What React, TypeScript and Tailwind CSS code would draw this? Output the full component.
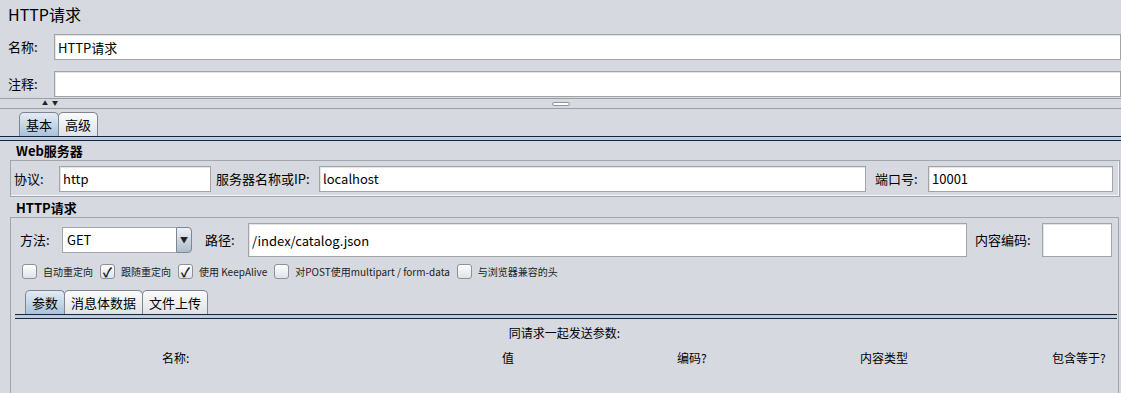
import React from 'react';

const font = { fontFamily: '"Noto Sans CJK SC", "Liberation Sans", sans-serif' };

function TextField({ value = '', className = '' }: { value?: string; className?: string }) {
    return (
        <div className={`bg-white border border-[#a4a4a4] shadow-[inset_1px_1px_0_#e4e4e4] flex items-center px-[3px] text-[13px] text-black ${className}`}>
            <span className="leading-none">{value}</span>
        </div>
    );
}

function Tab({ label, active }: { label: string; active?: boolean }) {
    return (
        <div
            className={`h-[24px] px-[6px] flex items-center border border-b-0 border-[#7f8590] rounded-t-[5px] text-[13px] -mr-px ${
                active ? 'bg-gradient-to-b from-[#e3ecf5] to-[#a9c2db]' : 'bg-gradient-to-b from-[#fbfbfc] to-[#dfe2e7]'
            }`}
        >
            {label}
        </div>
    );
}

function TabLine() {
    return <div className="h-[5px] border-t border-b border-[#1c2236] bg-[#b9cde3]" />;
}

function Check({ checked, label }: { checked?: boolean; label: string }) {
    return (
        <div className="flex items-center gap-[6px] mr-[7px]">
            <div className="w-[15px] h-[15px] rounded-[3px] border border-[#8c919b] bg-gradient-to-b from-white to-[#dfe2e7] flex items-center justify-center text-[13px] font-bold leading-none text-[#1a1a1a]">
                {checked ? '✓' : ''}
            </div>
            <span className="text-[10px] text-[#222]">{label}</span>
        </div>
    );
}

export default function App() {
    return (
        <div className="w-[1121px] h-[393px] bg-[#d6d9df] overflow-hidden text-black" style={font}>
            {/* Title */}
            <div className="h-[34px] pl-[8px] pt-[2px] text-[16px] leading-[24px]">HTTP请求</div>

            {/* Name / comment */}
            <div className="flex items-center pl-[8px] h-[26px]">
                <span className="w-[46px] text-[13px]">名称:</span>
                <TextField value="HTTP请求" className="flex-1 h-[26px]" />
            </div>
            <div className="flex items-center pl-[8px] h-[26px] mt-[11px]">
                <span className="w-[46px] text-[13px]">注释:</span>
                <TextField className="flex-1 h-[26px]" />
            </div>

            {/* Split pane divider */}
            <div className="mt-[1px] h-[11px] border-t border-b border-[#9c9fa6] flex items-center relative">
                <div className="absolute left-[42px] top-[1px] flex gap-[4px] text-[6px] leading-none text-[#222]">
                    <span>▲</span>
                    <span>▼</span>
                </div>
                <div className="mx-auto w-[18px] h-[4px] rounded-[2px] border border-[#8f939b] bg-white" />
            </div>

            {/* Main tabs */}
            <div className="pt-[3px]">
                <div className="flex pl-[19px]">
                    <Tab label="基本" active />
                    <Tab label="高级" />
                </div>
                <TabLine />
            </div>

            {/* Web server */}
            <div className="pl-[16px] h-[19px] flex items-end text-[13px] font-bold">Web服务器</div>
            <div className="ml-[10px] mr-[1px] h-[37px] border border-[#a2a5ab] shadow-[inset_-1px_-1px_0_#f4f5f7] flex items-center pl-[3px] pr-[6px] text-[13px]">
                <span className="w-[45px]">协议:</span>
                <TextField value="http" className="w-[152px] h-[26px]" />
                <span className="ml-[5px] w-[103px]">服务器名称或IP:</span>
                <TextField value="localhost" className="flex-1 h-[26px]" />
                <span className="ml-[9px] w-[53px]">端口号:</span>
                <TextField value="10001" className="w-[185px] h-[26px]" />
            </div>

            {/* HTTP request */}
            <div className="pl-[16px] h-[20px] flex items-end text-[13px] font-bold">HTTP请求</div>
            <div className="ml-[10px] mr-[2px] h-[200px] border-l border-t border-r border-[#a2a5ab]">
                <div className="flex items-center pt-[5px] pl-[9px] pr-[6px] text-[13px]">
                    <span className="w-[42px]">方法:</span>
                    <div className="flex h-[26px] w-[130px]">
                        <div className="flex-1 bg-white border border-[#a4a4a4] border-r-0 flex items-center px-[4px]">GET</div>
                        <div className="w-[16px] border border-[#7d8694] rounded-r-[4px] bg-gradient-to-b from-[#eef2f6] to-[#aebccb] flex items-center justify-center text-[8px] leading-none text-[#222]">
                            ▼
                        </div>
                    </div>
                    <span className="ml-[13px] w-[43px]">路径:</span>
                    <TextField value="/index/catalog.json" className="flex-1 h-[34px]" />
                    <span className="ml-[8px] w-[67px]">内容编码:</span>
                    <TextField className="w-[70px] h-[34px]" />
                </div>

                <div className="flex items-center pl-[11px] mt-[5px] h-[18px]">
                    <Check label="自动重定向" />
                    <Check checked label="跟随重定向" />
                    <Check checked label="使用 KeepAlive" />
                    <Check label="对POST使用multipart / form-data" />
                    <Check label="与浏览器兼容的头" />
                </div>

                {/* Sub tabs */}
                <div className="mt-[10px] pl-[4px] pr-[1px]">
                    <div className="flex pl-[10px]">
                        <Tab label="参数" active />
                        <Tab label="消息体数据" />
                        <Tab label="文件上传" />
                    </div>
                    <TabLine />
                </div>

                <div className="text-center text-[12px] mt-[5px]">同请求一起发送参数:</div>
                <div className="relative h-[24px] mt-[4px] text-[12px]">
                    <span className="absolute left-[151px] top-[3px]">名称:</span>
                    <span className="absolute left-[491px] top-[3px]">值</span>
                    <span className="absolute left-[666px] top-[3px]">编码?</span>
                    <span className="absolute left-[849px] top-[3px]">内容类型</span>
                    <span className="absolute left-[1041px] top-[3px]">包含等于?</span>
                </div>
            </div>
        </div>
    );
}
